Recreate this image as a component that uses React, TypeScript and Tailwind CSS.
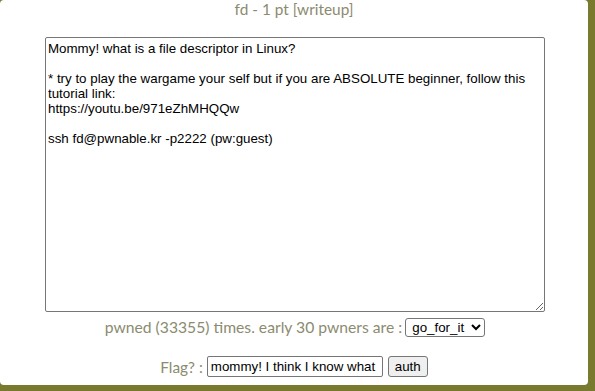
const writeup = `Mommy! what is a file descriptor in Linux?

* try to play the wargame your self but if you are ABSOLUTE beginner, follow this tutorial link:
https://youtu.be/971eZhMHQQw

ssh fd@pwnable.kr -p2222 (pw:guest)`;

export default function App() {
  return (
    <div className="w-[595px] h-[391px] bg-[#7a7a2e] overflow-hidden">
      <div className="w-[588px] h-[385px] bg-white rounded-[4px] flex flex-col items-center font-['Lato',sans-serif] text-[#8b8b6f]">
        <div className="mt-[-1px] text-[15.4px] leading-[20px]">
          fd - 1 pt <span>[writeup]</span>
        </div>
        <textarea
          className="mt-[18px] ml-[2px] w-[500px] h-[275px] border border-[#767676] rounded-[2px] px-[2px] pt-[3px] pb-[2px] text-[13.33px] leading-[15px] text-black font-['Liberation_Sans',Arial,sans-serif] outline-none resize-y"
          defaultValue={writeup}
        />
        <div className="mt-[5px] ml-[2px] flex items-center text-[15.7px] leading-[20px]">
          <span>pwned (33355) times. early 30 pwners are :</span>
          <select className="ml-[3px] h-[19px] w-[80px] border border-[#767676] rounded-[3px] text-[13.33px] text-black font-['Liberation_Sans',Arial,sans-serif] pl-[2px] appearance-auto bg-white">
            <option>go_for_it</option>
          </select>
        </div>
        <div className="mt-[19px] flex items-center text-[15.4px] leading-[20px]">
          <span>Flag? :</span>
          <input
            className="ml-[4px] w-[176px] h-[21px] border border-[#767676] rounded-[2px] px-[3px] text-[13.33px] text-black font-['Liberation_Sans',Arial,sans-serif] outline-none"
            defaultValue="mommy! I think I know what"
          />
          <button className="ml-[5px] h-[21px] px-[6px] bg-[#efefef] border border-[#767676] rounded-[3px] text-[13.33px] text-black font-['Liberation_Sans',Arial,sans-serif]">
            auth
          </button>
        </div>
      </div>
    </div>
  );
}
